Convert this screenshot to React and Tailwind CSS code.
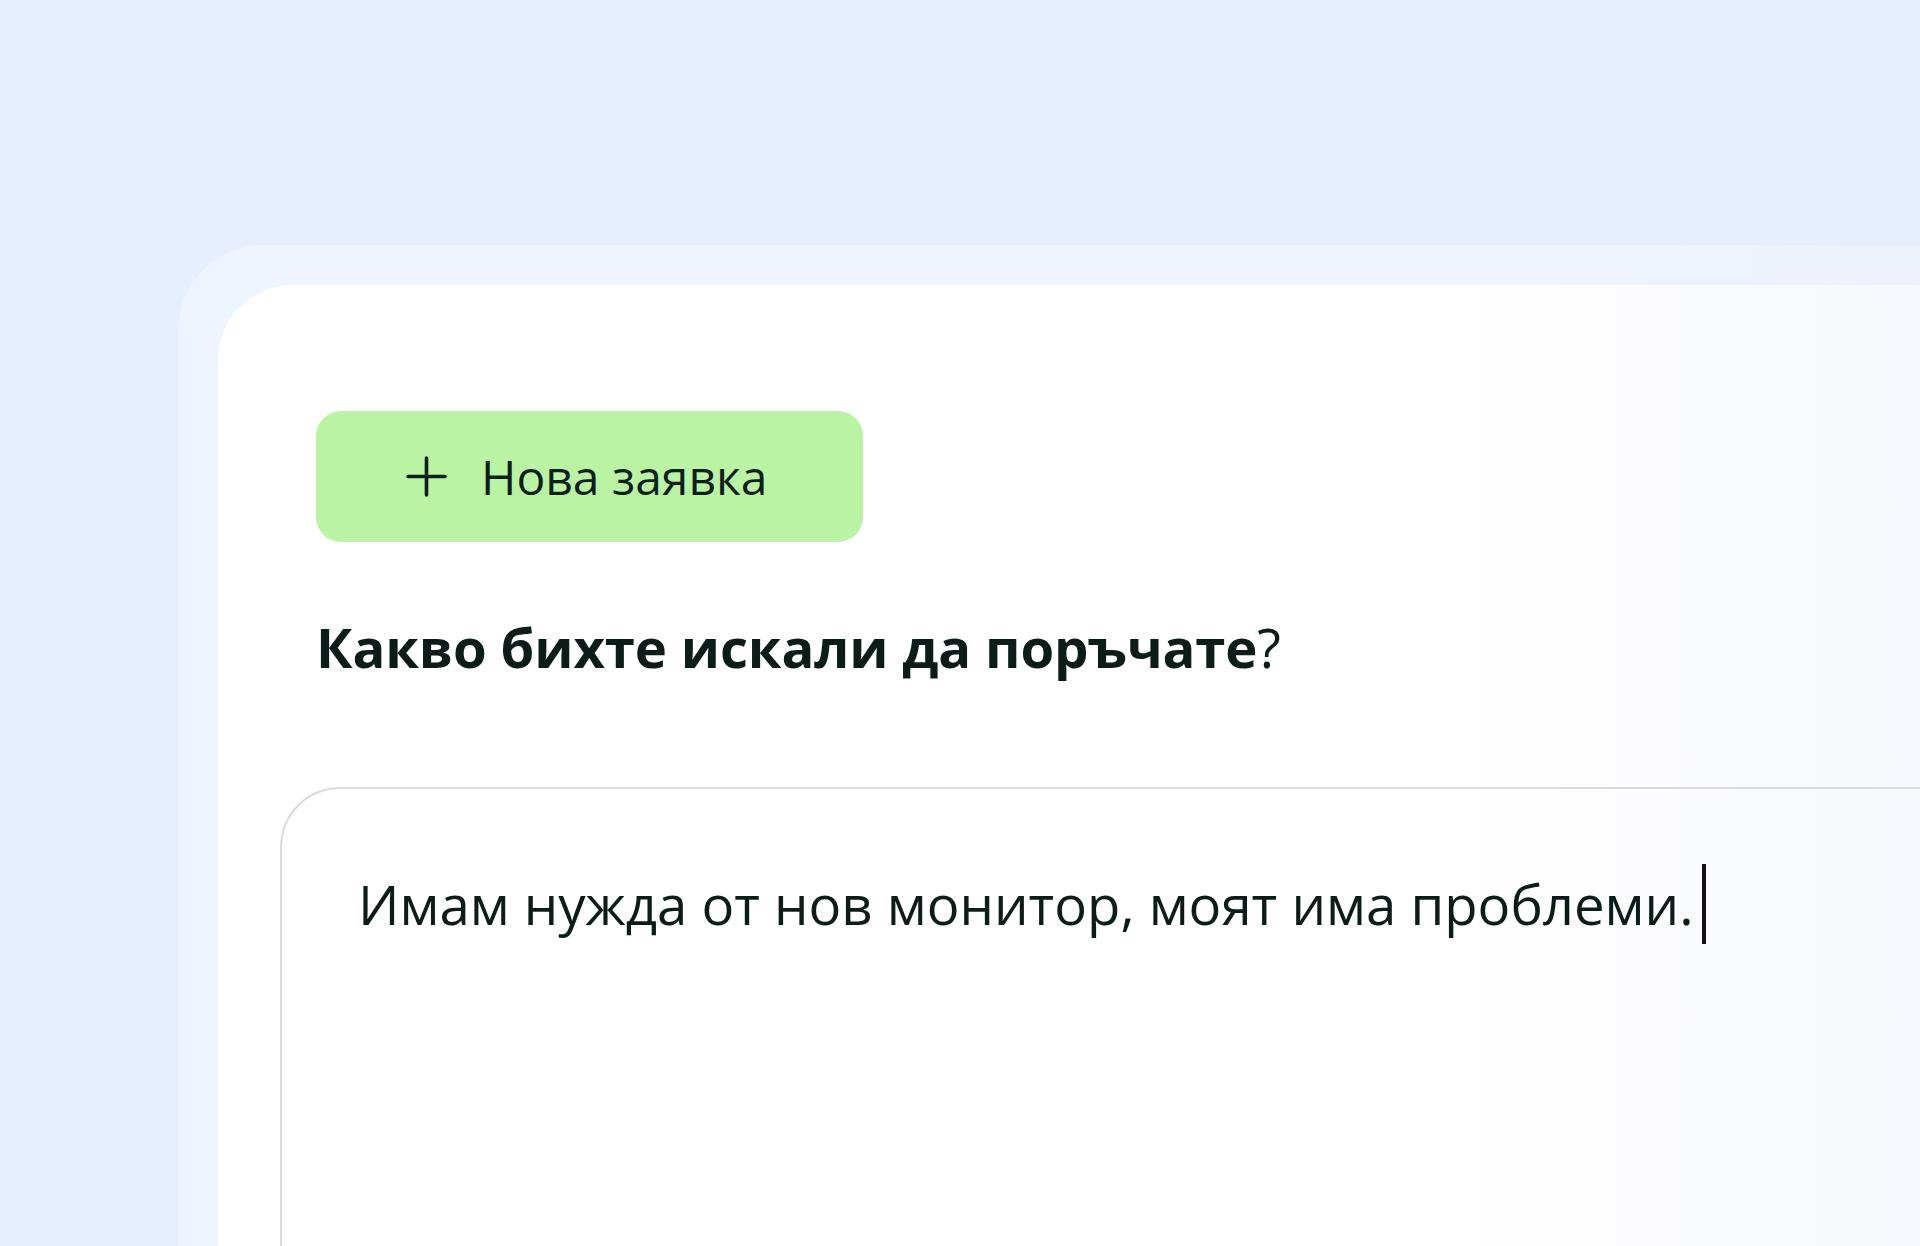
import React from "react";

export default function App() {
  return (
    <div
      className="relative w-full h-[1246px] overflow-hidden bg-[#e6effe] pl-[178px] pt-[245px] flex flex-col"
      style={{ fontFamily: '"Open Sans", "Noto Sans", sans-serif' }}
    >
      <div className="flex-1 flex flex-col bg-[linear-gradient(to_right,#eef5fe_80%,#edf1fc)] rounded-tl-[86px] pl-[40px] pt-[40px]">
        <div className="flex-1 flex flex-col bg-[linear-gradient(to_right,#ffffff_72%,#f7f8fd)] rounded-tl-[75px] pl-[62px] pt-[126px]">
          <button className="ml-[36px] w-[547px] h-[131px] rounded-[25px] bg-[#bbf3a5] flex items-center pl-[90px] text-[#0c1f1b]">
            <svg width="41" height="41" viewBox="0 0 41 41" fill="none" stroke="#0c1f1b" strokeWidth="3.6" strokeLinecap="round">
              <path d="M20.5 2v37M2 20.5h37" />
            </svg>
            <span className="ml-[34px] text-[48px] leading-none">Нова заявка</span>
          </button>
          <h1 className="ml-[36px] mt-[73px] text-[54.5px] leading-[1.2] font-bold text-[#0c1c19] tracking-[-0.15px]">
            Какво бихте искали да поръчате<span className="font-medium">?</span>
          </h1>
          <div className="flex-1 mt-[107px] border-l-2 border-t-2 border-[#dadada] rounded-tl-[60px] pl-[76px] pt-[75px]">
            <p className="text-[54.5px] leading-[1.2] text-[#0c1c19] flex items-center">
              Имам нужда от нов монитор, моят има проблеми.
              <span className="inline-block w-[4px] h-[80px] bg-[#111] ml-[8px]"></span>
            </p>
          </div>
        </div>
      </div>
    </div>
  );
}
